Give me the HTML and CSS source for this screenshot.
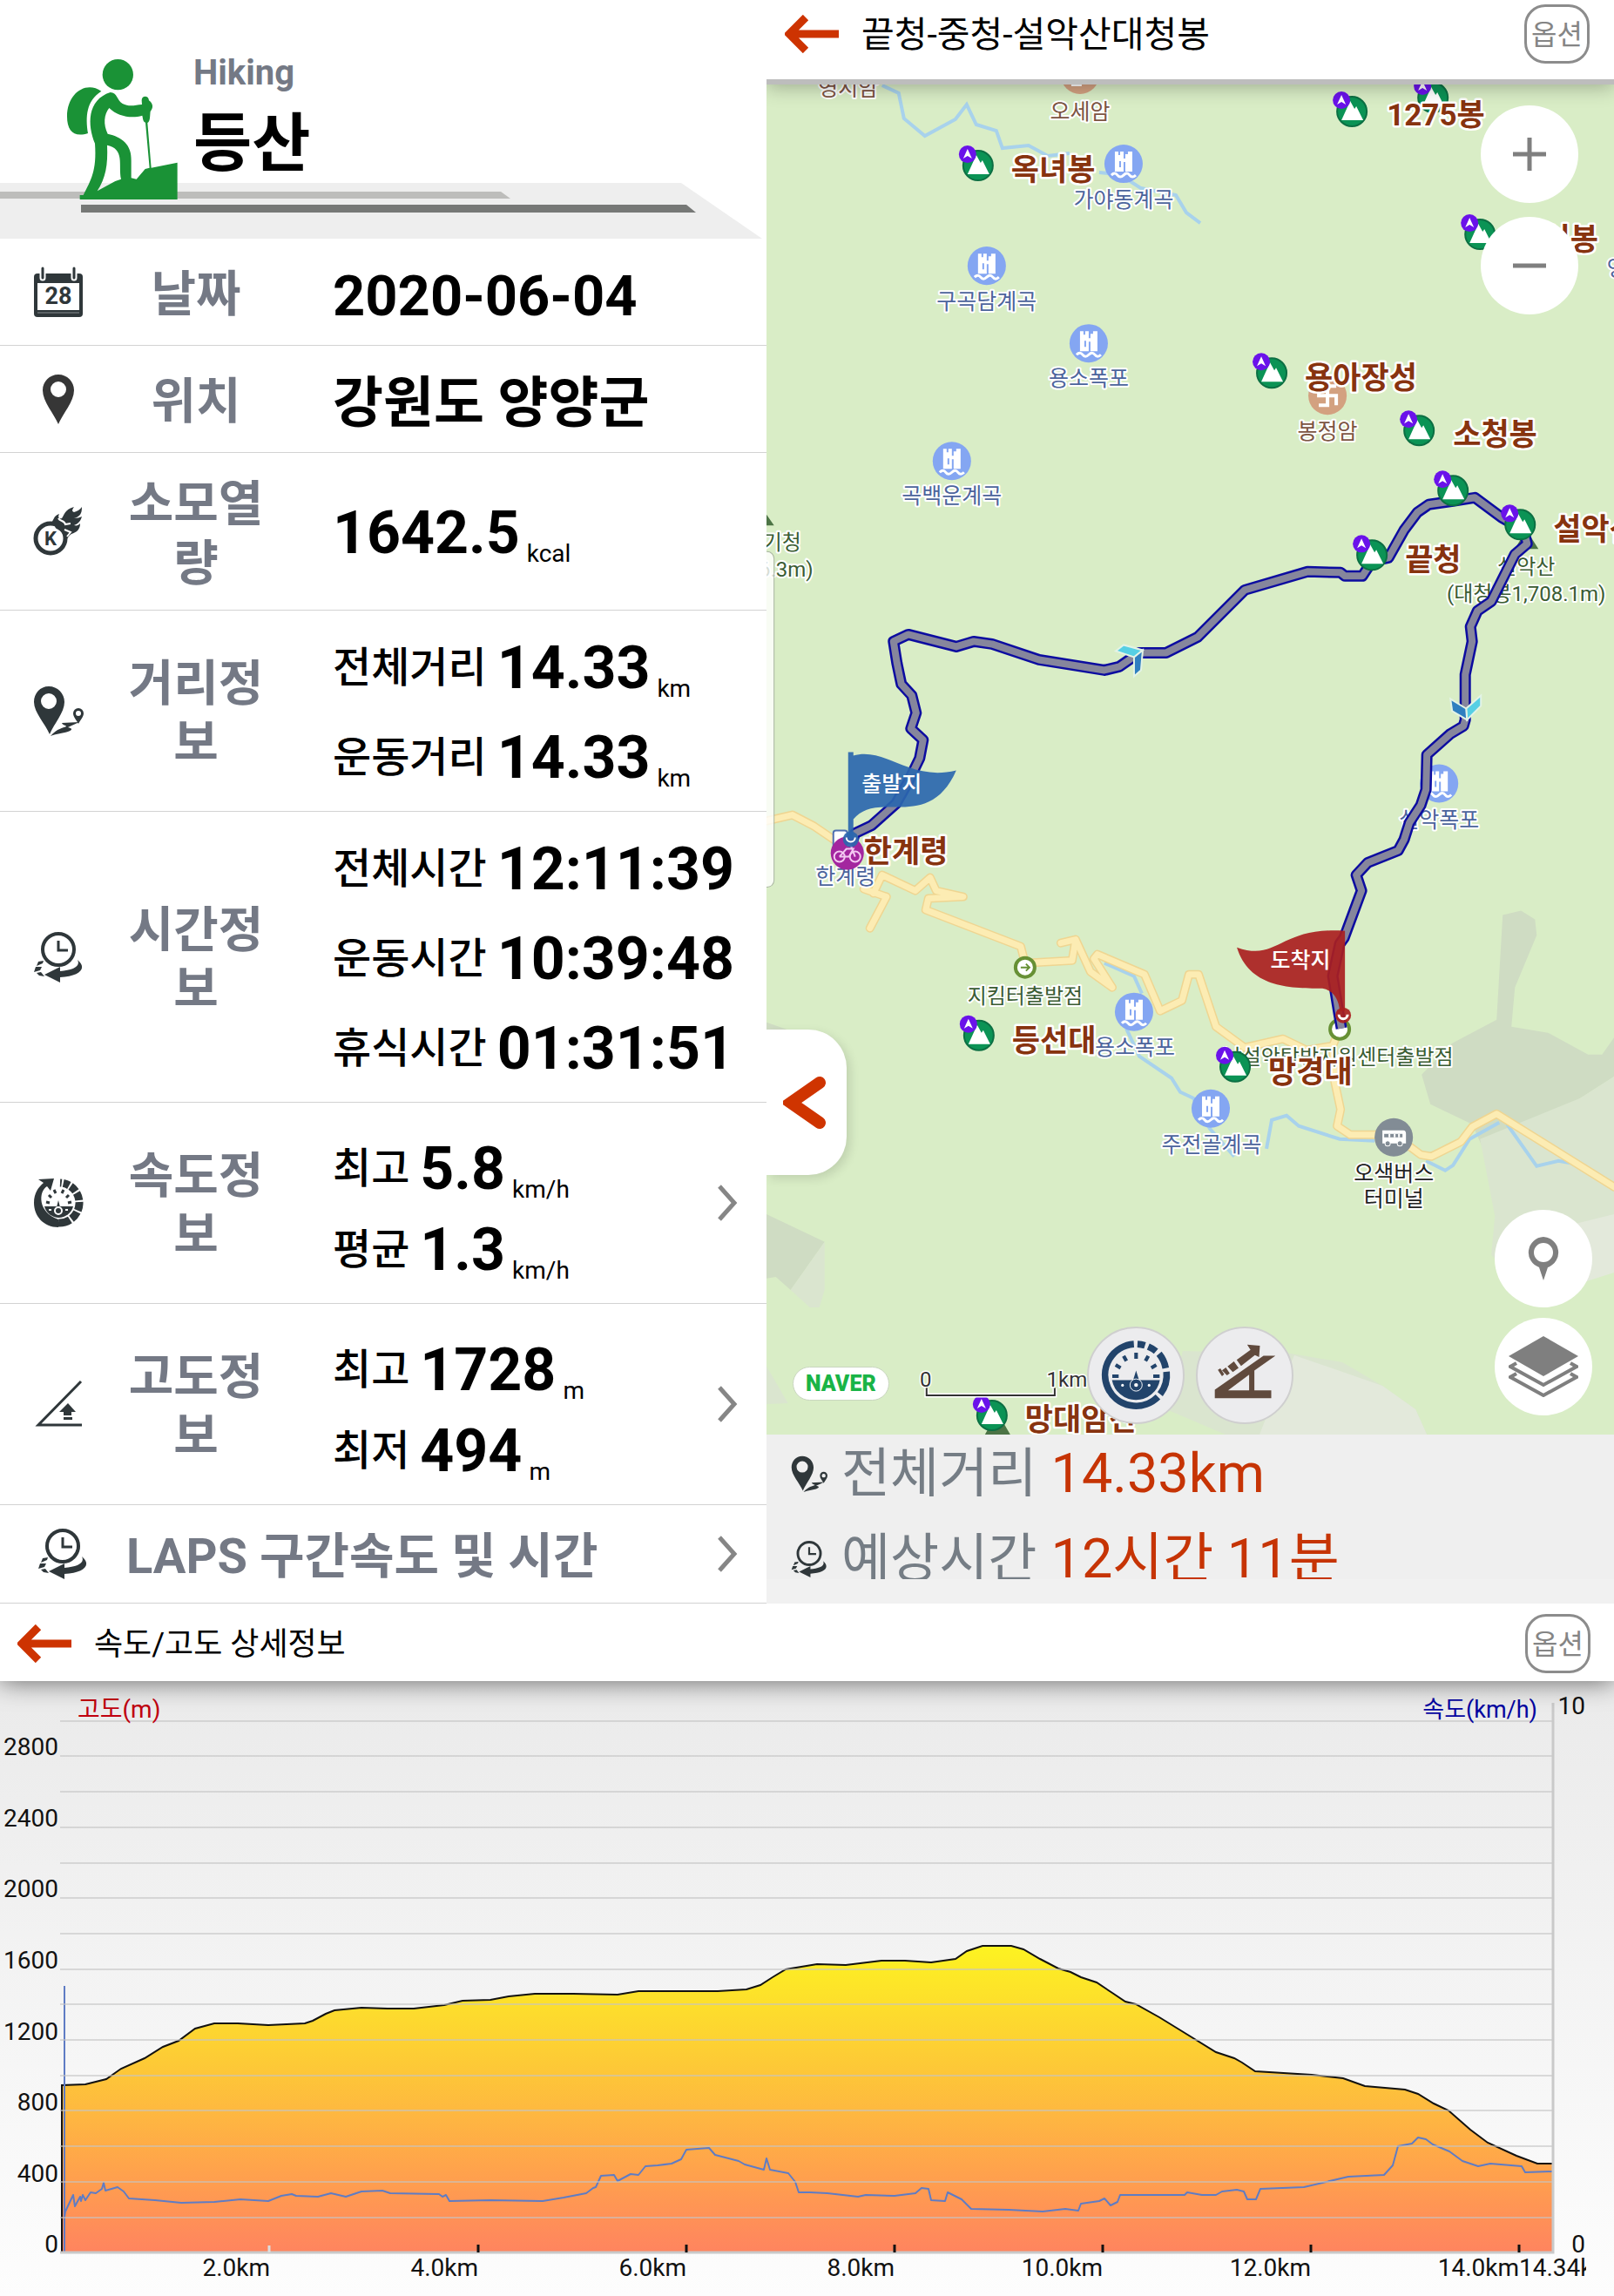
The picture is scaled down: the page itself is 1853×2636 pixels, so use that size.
FILE: index.html
```html
<!DOCTYPE html>
<html lang="ko">
<head>
<meta charset="utf-8">
<meta name="viewport" content="width=device-width, initial-scale=1">
<title>등산 기록</title>
<link rel="stylesheet" href="styles.css">
</head>
<body>
<svg class="defs" aria-hidden="true">
  <symbol id="i-chevron" viewBox="0 0 24 42"><path d="M2 2 19 21 2 40" fill="none" stroke="#868686" stroke-width="5"/></symbol>
  <symbol id="i-back" viewBox="0 0 64 44"><path d="M62 22H8M24 3 5 22l19 19" fill="none" stroke="#cd3301" stroke-width="9"/></symbol>
  <symbol id="i-pin" viewBox="0 0 58 58"><path fill-rule="evenodd" d="M29 1c10 0 18 8 18 18 0 13-13 27-18 39C24 46 11 32 11 19 11 9 19 1 29 1zm0 8a9 9 0 1 0 0 18 9 9 0 0 0 0-18z" fill="#363636"/></symbol>
  <symbol id="i-distance" viewBox="0 0 58 58">
    <path fill-rule="evenodd" d="M18 1c10 0 18 8 18 18 0 12-12 25-17 37C14 44 1 31 1 19 1 9 8 1 18 1zm0 8a9 9 0 1 0 0 18 9 9 0 0 0 0-18z" fill="#2f373a"/>
    <path d="M20 58c8-3 13-3 20-5 6-2 5-4 0-5 4-2 9-4 13-6l-20 1c1 3 6 3 5 4-4 2-10 2-18 11z" fill="#2f373a"/>
    <path fill-rule="evenodd" d="M52 26a6 6 0 0 1 6 6c0 4-4 8-6 12-2-4-6-8-6-12a6 6 0 0 1 6-6zm0 3a3 3 0 1 0 0 6 3 3 0 0 0 0-6z" fill="#2f373a"/>
  </symbol>
  <symbol id="i-time" viewBox="0 0 58 58">
    <circle cx="29" cy="20" r="18" fill="none" stroke="#2f373a" stroke-width="4"/>
    <path d="M29 10v11h11" fill="none" stroke="#2f373a" stroke-width="3"/>
    <path d="M51 32c12 10 2 19-20 20v6L13 49l18-9v5c14-1 24-5 20-13z" fill="#2f373a"/>
    <path d="M12 33l-6 1-2 5 7-3zM3 40l-2 6 7-2 2-4zM4 47l5-1 4 5-6-1z" fill="#2f373a"/>
  </symbol>
  <symbol id="i-speed" viewBox="0 0 58 58">
    <path d="M29 57C12 57 1 44 1 29 1 18 6 11 12 6L6 2l18-1-4 14-4-5C6 16 5 40 29 48z" fill="#2f373a"/>
    <path d="M29 52a23 23 0 1 0 2-46" fill="none" stroke="#2f373a" stroke-width="9" stroke-dasharray="14 2 10 2 10 2 9 2 8 2 7 2"/>
    <path d="M13 33h33a17 17 0 0 1-33 0z" fill="#2f373a"/>
    <path d="M15 28l4 1M18 20l3 3M24 14l2 4M35 14l-2 4M41 20l-3 3M44 28l-4 1" stroke="#2f373a" stroke-width="3"/>
    <path d="M29 26l3 12h-6z" fill="#2f373a"/><circle cx="29" cy="38" r="4" fill="#2f373a" stroke="#fff" stroke-width="2"/>
    <path d="M18 37h3M37 37h3" stroke="#fff" stroke-width="2"/>
  </symbol>
  <symbol id="i-altitude" viewBox="0 0 58 58">
    <path d="M55 3 6 53h50" fill="none" stroke="#2f373a" stroke-width="3"/>
    <path d="M40 28l9 10h-5v4h-9v-4h-5zM35 44h10v3H35z" fill="#2f373a"/>
  </symbol>
</svg>

<main class="page">
  <div class="overview">
    <section class="summary" aria-label="운동 요약">
      <header class="hero">
        <svg class="hero-art" viewBox="0 0 880 274" preserveAspectRatio="xMinYMax slice" aria-hidden="true">
          <path d="M0 210H782L875 274H0z" fill="#eee"/>
          <path d="M0 220H575L586 228H0z" fill="#bdbdbb"/>
          <path d="M93 235H788L799 244H93z" fill="#767876"/>
          <g transform="translate(65 60) scale(.3333)" fill="#1a9236">
            <circle cx="211" cy="77" r="53"/>
            <path d="M154 134c-52 33-55 88-46 145C60 294 36 271 36 221c0-80 65-124 118-87z"/>
            <path d="M185 138c24 1 22 26 42 39 23 12 43 5 67 3l-1-14c0-18 24-18 25 0 17 12 14 28 5 38-2 15 0 34-10 39l13 155 90-18v127H80v-15h12c25-51 47-82 40-178-26-62-28-150 53-176zM181 192c-18 23-21 56-5 89 49 11 83 37 81 92v60l18 4 30-35 15-4-14-156c-9-3-9-17-11-24-38 12-86 2-114-26zM174 320c3 69-5 112-34 158l62-34 20-7c-10-49 14-104-48-117z" fill-rule="evenodd"/>
          </g>
        </svg>
        <div class="hero-text">
          <p class="sport-en">Hiking</p>
          <h1 class="sport-ko">등산</h1>
        </div>
      </header>

      <ul class="stats">
        <li class="row">
          <svg class="icon" viewBox="0 0 58 58">
            <path d="M5 8h48a4 4 0 0 1 4 4v42a4 4 0 0 1-4 4H5a4 4 0 0 1-4-4V12a4 4 0 0 1 4-4z" fill="#2f373a"/>
            <path d="M5 19h48v31H5z" fill="#fff"/><path d="M5 53h48" stroke="#8b9092" stroke-width="1"/>
            <path d="M11 1v12M47 1v12" stroke="#fff" stroke-width="7" stroke-linecap="round"/>
            <path d="M11 2v11M47 2v11" stroke="#2f373a" stroke-width="3" stroke-linecap="round"/>
            <text x="29" y="43" text-anchor="middle" font-size="27" font-weight="700" fill="#2f373a">28</text>
          </svg>
          <span class="label">날짜</span>
          <div class="values values-single"><p class="line date"><strong>2020-06-04</strong></p></div>
        </li>
        <li class="row">
          <svg class="icon"><use href="#i-pin"/></svg>
          <span class="label">위치</span>
          <div class="values values-single"><p class="line place"><strong>강원도 양양군</strong></p></div>
        </li>
        <li class="row row-calories">
          <svg class="icon" viewBox="0 0 58 58">
            <circle cx="20" cy="37" r="17" fill="none" stroke="#2f373a" stroke-width="5"/>
            <path d="M20 20c4-3 3-9 10-11-2 4 0 6 3 5 3-4 3-10 14-13-2 3-3 5 0 6 4-1 7-3 9-6 0 8-2 11-9 13 3 0 7-1 9-2-2 7-6 9-9 10 3 1 5 0 7-2 0 7-4 10-10 12-3 2-5 6-7 8-1-6-4-11-10-14-3-1 0-5-7-6z" fill="#2f373a"/>
            <path d="M29 14c2 4 7 2 8 7l6-1M36 27l7 3-4 5" fill="none" stroke="#fff" stroke-width="2"/>
            <text x="20" y="45" text-anchor="middle" font-size="22" font-weight="700" fill="#2f373a">K</text>
          </svg>
          <span class="label">소모열량</span>
          <div class="values"><p class="line"><strong>1642.5</strong><span class="unit">kcal</span></p></div>
        </li>
        <li class="row">
          <svg class="icon"><use href="#i-distance"/></svg>
          <span class="label">거리정보</span>
          <div class="values">
            <p class="line"><span class="name">전체거리</span><strong>14.33</strong><span class="unit">km</span></p>
            <p class="line"><span class="name">운동거리</span><strong>14.33</strong><span class="unit">km</span></p>
          </div>
        </li>
        <li class="row">
          <svg class="icon"><use href="#i-time"/></svg>
          <span class="label">시간정보</span>
          <div class="values">
            <p class="line"><span class="name">전체시간</span><strong>12:11:39</strong></p>
            <p class="line"><span class="name">운동시간</span><strong>10:39:48</strong></p>
            <p class="line"><span class="name">휴식시간</span><strong>01:31:51</strong></p>
          </div>
        </li>
        <li class="row row-pair">
          <svg class="icon"><use href="#i-speed"/></svg>
          <span class="label">속도정보</span>
          <div class="values values-tight">
            <p class="line"><span class="name">최고</span><strong>5.8</strong><span class="unit">km/h</span></p>
            <p class="line"><span class="name">평균</span><strong>1.3</strong><span class="unit">km/h</span></p>
          </div>
          <button class="more" type="button" aria-label="속도 상세"><svg><use href="#i-chevron"/></svg></button>
        </li>
        <li class="row row-pair">
          <svg class="icon"><use href="#i-altitude"/></svg>
          <span class="label">고도정보</span>
          <div class="values values-tight">
            <p class="line"><span class="name">최고</span><strong>1728</strong><span class="unit">m</span></p>
            <p class="line"><span class="name">최저</span><strong>494</strong><span class="unit">m</span></p>
          </div>
          <button class="more" type="button" aria-label="고도 상세"><svg><use href="#i-chevron"/></svg></button>
        </li>
        <li class="row row-laps">
          <svg class="icon"><use href="#i-time"/></svg>
          <span class="laps">LAPS 구간속도 및 시간</span>
          <button class="more" type="button" aria-label="구간 상세"><svg><use href="#i-chevron"/></svg></button>
        </li>
      </ul>
    </section>

    <section class="course" aria-label="코스 지도">
      <header class="bar bar-map">
        <button class="back" type="button" aria-label="뒤로"><svg><use href="#i-back"/></svg></button>
        <h2 class="title title-map">끝청-중청-설악산대청봉</h2>
        <button class="option" type="button">옵션</button>
      </header>

      <div class="map">
        <svg class="map-canvas" viewBox="880 97 973 1549" preserveAspectRatio="xMidYMid slice" role="img" aria-label="설악산 등산 경로">
          <defs>
            <g id="fall"><circle r="22" fill="#84a6f2"/><path d="M-10-14h4v4h2v-4h4V9h-10zM2-11h3v-3h5V9H2zM-5-3v7h2v-7zM0-6h3v4H0z" fill="#fff"/><path d="M-14 13q4-4 7 0t7 0 7 0 7 0" fill="none" stroke="#fff" stroke-width="3"/></g>
            <g id="temple"><circle r="22" fill="#d3a180"/><path d="M-10-11V0H10V11M10-11H0V11H-10" fill="none" stroke="#fff" stroke-width="4"/></g>
            <g id="peak"><circle r="17" fill="#0b9355" stroke="#0c6f43" stroke-width="2"/><path d="M-12 10-2-12 3-3 5-6 13 10z" fill="#fff"/><circle cx="-12" cy="-13" r="10" fill="#6a12ea"/><path d="M-12-19l5 11-5-3-5 3z" fill="#fff"/></g>
          </defs>
          <rect x="880" y="97" width="973" height="1549" fill="#d9edc6"/>

          <g fill="#cfdcc3">
            <path d="M1725 1050 1746 1045 1762 1055 1764 1073 1739 1133 1735 1178 1777 1185 1823 1210 1839 1210 1853 1190V1235L1814 1260 1711 1337 1690 1290 1642 1267 1632 1233 1667 1197 1718 1170z"/>
            <path d="M880 1393 947 1425 908 1480 891 1465 880 1467zM880 1173 912 1184 880 1190z"/>
          </g>
          <g fill="#dae5cf">
            <path d="M1853 1235 1814 1260 1699 1307 1716 1395 1712 1440 1740 1470 1828 1465 1853 1450zM947 1425 908 1480 930 1500 941 1500 947 1480z"/>
            <path d="M880 1567 905 1610 880 1611zM1358 1550 1482 1553 1541 1563 1587 1590 1625 1617 1638 1646H1407L1339 1617z"/>
          </g>
          <path d="M1785 1410 1853 1393V1460L1790 1480zM1486 1555 1587 1590 1625 1617 1638 1646H1446L1460 1610z" fill="#e3e9db"/>

          <g class="river">
            <path d="M1013 98 1032 107 1038 136 1062 156 1097 137 1110 120 1121 143 1144 150 1151 170 1181 167 1203 179 1228 176M1262 198 1285 200 1310 216 1350 224 1362 244 1378 256"/>
            <path d="M1268 1105 1302 1120 1311 1140M1293 1180 1308 1212 1345 1237 1355 1253 1370 1260 1389 1295 1417 1327M1454 1318 1460 1285 1477 1280 1491 1292 1538 1307 1578 1309M1637 1332 1659 1343 1668 1337 1687 1307 1721 1288M1730 1290 1764 1338 1789 1332 1817 1337 1853 1365"/>
          </g>
          <path id="roads" class="road" d="M880 942 910 935 935 948 960 965M992 1020 1018 1029 999 1065M1003 1025 1013 1004 1051 1022 1068 1007 1075 1022 1106 1029 1066 1031 1063 1044 1172 1086 1177 1105 1231 1102 1235 1078 1218 1082M1235 1078 1252 1115 1277 1133 1256 1100 1260 1095 1314 1118 1332 1160 1357 1148 1365 1118 1376 1118 1396 1178 1429 1202 1473 1192 1500 1205 1530 1200 1538 1180M1530 1200 1532 1240 1539 1273 1535 1292 1550 1302 1600 1302 1631 1325 1643 1327 1677 1310 1690 1293 1718 1278 1853 1362"/>
          <use href="#roads" class="road-fill"/>

          <g fill="#4c7445"><path d="M869 603 880 590 889 603zM1739 630 1752 608 1766 630zM1131 1646 1145 1620 1160 1646z"/></g>

          <g>
            <use href="#temple" x="1240" y="86"/><use href="#temple" x="1524" y="454"/>
            <use href="#fall" x="1290" y="188"/><use href="#fall" x="1133" y="305"/><use href="#fall" x="1250" y="394"/>
            <use href="#fall" x="1093" y="529"/><use href="#fall" x="1652" y="899"/><use href="#fall" x="1302" y="1161"/><use href="#fall" x="1390" y="1272"/>
            <g transform="translate(1600 1305)"><circle r="22" fill="#828c95"/><path d="M-13-8h24q3 0 3 4V7h-27z" fill="#fff"/><path d="M-11-4h21v4h-21z" fill="#828c95"/><path d="M-5-4v4M1-4v4M6-4v4" stroke="#fff" stroke-width="2"/><circle cx="-7" cy="7" r="3" fill="#828c95" stroke="#fff"/><circle cx="7" cy="7" r="3" fill="#828c95" stroke="#fff"/></g>
            <g fill="#fff" stroke="#679035" stroke-width="4"><circle cx="1177" cy="1110" r="11"/><circle cx="1538" cy="1181" r="11"/></g>
            <path d="M1172 1110h9M1178 1106l4 4-4 4" fill="none" stroke="#679035" stroke-width="2"/>
          </g>

          <g class="poi poi-temple"><text x="974" y="110">영시암</text><text x="1240" y="137">오세암</text><text x="1524" y="504">봉정암</text></g>
          <g class="poi poi-water">
            <text x="1290" y="238">가야동계곡</text><text x="1133" y="355">구곡담계곡</text><text x="1250" y="443">용소폭포</text><text x="1093" y="578">곡백운계곡</text>
            <text x="1652" y="949">설악폭포</text><text x="1303" y="1210">용소폭포</text><text x="1391" y="1322">주전골계곡</text><text x="971" y="1014">한계령</text><text x="1856" y="317">영</text>
          </g>
          <g class="poi poi-hill">
            <text x="876" y="631">귀때기청</text><text x="876" y="662">(1,576.3m)</text><text x="1752" y="659">설악산</text><text x="1752" y="690">(대청봉1,708.1m)</text>
            <text x="1177" y="1151">지킴터출발점</text><text x="1536" y="1221">남설악탐방지원센터출발점</text>
          </g>
          <g class="poi poi-stop"><text x="1600" y="1355">오색버스</text><text x="1600" y="1384">터미널</text></g>

          <path id="track" class="track" d="M978 968 982 956 1001 947 1029 922 1043 897 1056 870 1060 849 1046 836 1052 818 1047 798 1035 785 1030 761 1026 736 1043 728 1098 742 1118 736 1139 739 1193 757 1268 769 1285 765 1308 749 1339 749 1375 731 1429 677 1501 656 1539 657 1544 661 1564 661 1575 644 1594 640 1612 608 1627 588 1640 579 1668 575 1693 571 1724 594 1749 608 1753 624 1739 636 1712 690 1696 701 1688 719 1690 736 1682 774 1682 826 1680 833 1665 842 1638 866 1637 906 1631 924 1618 944 1612 963 1605 976 1570 990 1557 1004 1563 1022 1543 1076 1538 1083 1530 1120 1537 1163 1540 1180"/>
          <use href="#track" class="track-fill"/>
          <g stroke="#e3f3e6" stroke-width="2">
            <path d="M1281 747 1290 740 1312 746 1302 754zM1700 798 1700 810 1684 826 1683 813z" fill="#56cfe4"/>
            <path d="M1312 746 1310 769 1302 776 1302 754zM1665 802 1683 813 1684 826 1667 816z" fill="#2f7fc0"/>
          </g>

          <g>
            <use href="#peak" x="1645" y="112"/><use href="#peak" x="1552" y="128"/><use href="#peak" x="1123" y="190"/><use href="#peak" x="1699" y="269"/>
            <use href="#peak" x="1460" y="428"/><use href="#peak" x="1629" y="494"/><use href="#peak" x="1668" y="563"/><use href="#peak" x="1745" y="602"/>
            <use href="#peak" x="1575" y="637"/><use href="#peak" x="1124" y="1188"/><use href="#peak" x="1418" y="1224"/><use href="#peak" x="1139" y="1624"/>
          </g>

          <g><rect x="957" y="953" width="16" height="20" rx="3" fill="#fff" stroke="#4f6fb0" stroke-width="2"/><circle cx="973" cy="979" r="19" fill="#a3269f"/>
            <g fill="none" stroke="#f3c8f2" stroke-width="2"><circle cx="964" cy="983" r="6"/><circle cx="982" cy="983" r="6"/><path d="M964 983l8-9h8l-5 9h-11M982 983l-5-13h-4"/></g></g>
          <g class="flag-start"><path d="M974 863h6v4c38-10 64 30 118 17-20 46-53 42-80 42-19 0-29 4-38 14v22h-6z"/><circle cx="977" cy="963" r="9"/><path d="M972 961a5 5 0 0 0 10 0" fill="none" stroke="#fff" stroke-width="2"/></g>
          <g class="flag-end"><path d="M1420 1087c48 17 48-24 124-19v92h-6c-1-14-8-24-20-26-40 0-84-2-98-47z"/><circle cx="1542" cy="1165" r="9"/><path d="M1537 1164a5 5 0 0 0 10 0" fill="none" stroke="#fff" stroke-width="3"/></g>
          <g class="flag-text"><text x="1024" y="908">출발지</text><text x="1493" y="1110">도착지</text></g>

          <g class="summit">
            <text x="1592" y="144">1275봉</text><text x="1161" y="207">옥녀봉</text><text x="1738" y="287">신선봉</text><text x="1498" y="446">용아장성</text>
            <text x="1668" y="511">소청봉</text><text x="1783" y="620">설악산</text><text x="1613" y="655">끝청</text><text x="992" y="989">한계령</text>
            <text x="1162" y="1206">등선대</text><text x="1456" y="1242">망경대</text><text x="1177" y="1641">망대암산</text>
          </g>
          <path d="M1064 1593v8h147v-8" fill="none" stroke="#fff" stroke-width="5"/>
          <path d="M1064 1592v9h147v-9" fill="none" stroke="#333" stroke-width="2"/>
          <g class="scale"><text x="1063" y="1591">0</text><text x="1225" y="1591">1km</text></g>
          <path d="M878 633h3a8 8 0 0 1 8 8v369a8 8 0 0 1-8 8h-3z" fill="#fff" fill-opacity=".8" stroke="#a9b5a0"/>
        </svg>

        <span class="naver">NAVER</span>
        <button class="round zoom-in" type="button" aria-label="확대"><svg viewBox="0 0 40 40"><path d="M20 1v38M1 20h38" stroke="#7f7f7f" stroke-width="5"/></svg></button>
        <button class="round zoom-out" type="button" aria-label="축소"><svg viewBox="0 0 40 40"><path d="M1 20h38" stroke="#7f7f7f" stroke-width="5"/></svg></button>
        <button class="round locate" type="button" aria-label="내 위치"><svg viewBox="0 0 40 50"><path fill-rule="evenodd" d="M20 0a18 18 0 0 1 5 35l-5 15-5-15A18 18 0 0 1 20 0zm0 7a11 11 0 1 0 0 22 11 11 0 0 0 0-22z" fill="#7f7f7f"/></svg></button>
        <button class="round layers" type="button" aria-label="지도 종류"><svg class="big" viewBox="0 0 80 70"><path d="M40 0 80 23 40 46 0 23z" fill="#7f7f7f"/><path d="M9 31 2 35 40 56 78 35 71 31M9 43 2 47 40 68 78 47 71 43" fill="none" stroke="#7f7f7f" stroke-width="4"/></svg></button>
        <button class="round tinted gauge" type="button" aria-label="속도 그래프">
          <svg class="full" viewBox="0 0 340 340"><g fill="none" stroke="#22446b" stroke-width="24"><path d="M250 248A112 112 0 1 1 163 57"/><path d="M176 57A112 112 0 0 1 203 62M215 66A112 112 0 0 1 243 83M254 92A112 112 0 0 1 278 144M281 157A112 112 0 0 1 258 238"/><path d="M171 110V88M136 118 126 100M205 118 215 100M115 143 97 132M226 143 244 132M108 173H85M233 173H256" stroke-width="13"/></g><path d="M84 187H257A88 88 0 0 1 84 187z" fill="#22446b"/><path d="M171 153 184 195H158z" fill="#22446b"/><circle cx="171" cy="205" r="22" fill="#22446b" stroke="#fff" stroke-width="3"/><circle cx="171" cy="205" r="7" fill="#fff"/><circle cx="122" cy="206" r="5" fill="#fff"/><circle cx="218" cy="206" r="5" fill="#fff"/></svg></button>
        <button class="round tinted slope" type="button" aria-label="고도 그래프">
          <svg class="full" viewBox="0 0 340 340" fill="#604a3d"><path fill-rule="evenodd" d="M62 222 238 99H281L205 153V224H266V253H62zM110 224H186V168z"/><path d="M141 114 191 78 179 59 225 63 222 104 207 97 157 136zM108 138 131 120 148 143 127 158zM88 152 102 142 116 163 106 170zM73 150 82 145 96 166 88 173z"/></svg></button>
        <button class="drawer" type="button" aria-label="목록 열기"><svg viewBox="0 0 50 62"><path d="M42 8 9 31 42 54" fill="none" stroke="#cf3400" stroke-width="14" stroke-linecap="round" stroke-linejoin="miter"/></svg></button>
      </div>

      <dl class="totals">
        <div class="total"><dt><svg><use href="#i-distance"/></svg>전체거리</dt><dd>14.33km</dd></div>
        <div class="total"><dt><svg><use href="#i-time"/></svg>예상시간</dt><dd>12시간 11분</dd></div>
      </dl>
    </section>
  </div>

  <section class="detail" aria-label="속도와 고도 그래프">
    <header class="bar bar-chart">
      <button class="back" type="button" aria-label="뒤로"><svg><use href="#i-back"/></svg></button>
      <h2 class="title">속도/고도 상세정보</h2>
      <button class="option" type="button">옵션</button>
    </header>
    <svg class="chart" viewBox="0 1929 1853 707" role="img" aria-label="거리별 고도와 속도">
      <defs><linearGradient id="terrain" gradientUnits="userSpaceOnUse" x1="0" y1="2233" x2="0" y2="2585"><stop offset="0" stop-color="#fdf321"/><stop offset=".4" stop-color="#fdc837"/><stop offset=".72" stop-color="#ffa44b"/><stop offset="1" stop-color="#ff845f"/></linearGradient></defs>
      <path d="M71 2585V2393L98 2392 122 2386 139 2374 166 2362 187 2349 205 2342 224 2328 246 2322H273L308 2324 350 2322 359 2319 374 2311 384 2307 415 2304 445 2305H475L510 2301 531 2296 563 2295 584 2291 614 2288H658L709 2289 733 2285H824L857 2283 873 2278 887 2269 902 2260 938 2254 971 2255 1012 2250H1039L1069 2252 1097 2248 1110 2239 1128 2233H1161L1175 2237 1194 2248 1215 2259 1229 2263 1241 2269 1259 2275 1277 2287 1292 2297 1304 2300 1331 2315 1357 2331 1396 2355 1417 2362 1426 2367 1441 2377 1506 2381 1542 2385 1567 2394 1613 2398 1628 2403 1646 2414 1663 2422 1688 2444 1708 2459 1741 2474 1765 2483H1782V2585z" fill="url(#terrain)"/>
      <path d="M71 2585V2393L98 2392 122 2386 139 2374 166 2362 187 2349 205 2342 224 2328 246 2322H273L308 2324 350 2322 359 2319 374 2311 384 2307 415 2304 445 2305H475L510 2301 531 2296 563 2295 584 2291 614 2288H658L709 2289 733 2285H824L857 2283 873 2278 887 2269 902 2260 938 2254 971 2255 1012 2250H1039L1069 2252 1097 2248 1110 2239 1128 2233H1161L1175 2237 1194 2248 1215 2259 1229 2263 1241 2269 1259 2275 1277 2287 1292 2297 1304 2300 1331 2315 1357 2331 1396 2355 1417 2362 1426 2367 1441 2377 1506 2381 1542 2385 1567 2394 1613 2398 1628 2403 1646 2414 1663 2422 1688 2444 1708 2459 1741 2474 1765 2483H1782" fill="none" stroke="#111" stroke-width="2"/>
      <path d="M74 2585V2279M74 2545 75 2538 84 2519 86 2532 92 2521 93 2526 95 2519 98 2525 104 2516 110 2517 117 2512 119 2505 121 2514 135 2510 142 2515 148 2523 178 2525 208 2528 246 2527 276 2524 308 2526 323 2520 335 2518 340 2520 365 2521 380 2517 397 2521 415 2515 439 2514 448 2517 504 2518 508 2521 512 2519 516 2526 563 2525 623 2526 647 2522 673 2517 681 2511 684 2510 690 2497 705 2496 709 2503 724 2495 733 2496 741 2486 755 2485 771 2483 782 2478 788 2467 814 2465 821 2473 848 2480 855 2484 877 2490 880 2477 884 2490 905 2494 913 2504 917 2516 930 2516 950 2517 985 2521 994 2519 1027 2520 1051 2517 1058 2511 1066 2512 1069 2525 1085 2526 1088 2516 1104 2524 1115 2535 1158 2536 1197 2538 1223 2535 1238 2537 1241 2529 1262 2526 1268 2523 1275 2531 1283 2527 1286 2519 1360 2519 1363 2516 1380 2519 1396 2519 1403 2515 1420 2513 1428 2515 1432 2524 1442 2524 1447 2512 1497 2510 1548 2498 1589 2496 1599 2485 1605 2463 1621 2460 1628 2453 1637 2455 1645 2461 1664 2469 1679 2480 1697 2486 1711 2483 1747 2486 1751 2493 1782 2492" fill="none" stroke="#5f7cc4" stroke-width="2" stroke-linejoin="round"/>
      <path d="M69 1975H1783M69 2015H1783M69 2056H1783M69 2097H1783M69 2138H1783M69 2178H1783M69 2219H1783M69 2260H1783M69 2300H1783M69 2341H1783M69 2382H1783M69 2422H1783M69 2463H1783M69 2504H1783M69 2545H1783" stroke="#c4c4c4" stroke-opacity=".6" stroke-width="2"/>
      <path d="M69 2585H1783V1954" fill="none" stroke="#c9c9c9" stroke-width="3"/>
      <path d="M309 2577v8" stroke="#ddd" stroke-width="3"/>
      <path d="M549 2576v9M788 2576v9M1027 2576v9M1266 2576v9M1505 2576v9M1744 2576v9" stroke="#111" stroke-width="3"/>
      <g class="tick"><text x="67" y="2014">2800</text><text x="67" y="2096">2400</text><text x="67" y="2177">2000</text><text x="67" y="2259">1600</text><text x="67" y="2341">1200</text><text x="67" y="2422">800</text><text x="67" y="2504">400</text><text x="67" y="2585">0</text>
        <text x="1820" y="1967">10</text><text x="1820" y="2585">0</text>
        <text x="310" y="2612">2.0km</text><text x="549" y="2612">4.0km</text><text x="788" y="2612">6.0km</text><text x="1027" y="2612">8.0km</text><text x="1266" y="2612">10.0km</text><text x="1505" y="2612">12.0km</text><text x="1744" y="2612">14.0km</text></g>
      <svg x="1744" y="2588" width="77" height="40"><text class="tick-last" x="0" y="24">14.34km</text></svg>
      <text class="axis-alt" x="89" y="1971">고도(m)</text><text class="axis-speed" x="1765" y="1971">속도(km/h)</text>
    </svg>
  </section>
</main>
</body>
</html>
```
FILE: styles.css
```css
* { box-sizing: border-box; }

body {
  margin: 0;
  background: #fff;
  color: #000;
  font-family: Roboto, "Noto Sans CJK KR", sans-serif;
}

h1, h2, p, ul, dl, dd { margin: 0; padding: 0; }
button { padding: 0; border: 0; background: none; font: inherit; cursor: pointer; }
svg { display: block; }
.defs { position: absolute; width: 0; height: 0; }

.overview {
  display: grid;
  grid-template-columns: 880fr 973fr;
}

/* Summary column */
.hero { display: grid; }
.hero-art, .hero-text { grid-area: 1 / 1; }
.hero-art { width: 100%; height: 100%; }
.hero-text { padding: 60px 0 52px 222px; }
.sport-en { color: #747985; font-size: 40px; line-height: 48px; font-weight: 700; }
.sport-ko { font-size: 73px; line-height: 114px; font-weight: 700; }

.stats { list-style: none; }
.row {
  display: grid;
  grid-template-columns: 58px 258px 1fr auto;
  align-items: center;
  padding: 10px 32px 10px 38px;
  border-bottom: 1px solid #d2d2d2;
}
.row-calories { padding-block: 19px; }
.row-pair { padding-block: 15px; }
.icon { width: 58px; height: 58px; }
.label {
  padding: 6px 49px 0;
  color: #747985;
  font-size: 56px;
  line-height: 68px;
  font-weight: 700;
  text-align: center;
}
.values { padding: 4px 0 0 28px; white-space: nowrap; }
.line { display: flex; align-items: center; height: 103px; }
.values-single { padding-top: 10px; }
.values-single .line { height: 92px; }
.values-tight { padding-top: 14px; }
.values-tight .line { height: 93px; }
.line strong { font-size: 68px; line-height: 78px; font-weight: 700; }
.date strong { font-size: 65px; }
.place strong { font-size: 63px; }
.name { margin-right: 12px; font-size: 48px; line-height: 60px; font-weight: 500; }
.unit { padding: 48px 0 0 8px; font-size: 28px; line-height: 32px; }
.more svg { width: 24px; height: 42px; }
.row-laps { padding-left: 43px; }
.laps {
  grid-column: 2 / 4;
  padding: 6px 0 0 44px;
  color: #747985;
  font-size: 56px;
  line-height: 86px;
  font-weight: 700;
  white-space: nowrap;
}

/* Title bars */
.bar {
  position: relative;
  z-index: 1;
  display: flex;
  align-items: center;
  gap: 24px;
  background: #fff;
  clip-path: inset(0 0 -60px 0);
}
.bar-map { padding: 5px 28px 18px 21px; border-bottom: 6px solid #bdbdbd; box-shadow: 0 2px 22px rgba(0, 0, 0, .3); }
.bar-chart { padding: 12px 27px 9px 20px; box-shadow: 0 0 30px rgba(0, 0, 0, .6); }
.back svg { width: 64px; height: 44px; }
.title { padding-top: 2px; font-size: 36px; line-height: 52px; font-weight: 400; }
.title-map { font-size: 41px; }
.option {
  width: 75px;
  height: 68px;
  margin-left: auto;
  padding-bottom: 4px;
  border: 3px solid #8c8c8c;
  border-radius: 24px;
  color: #858585;
  font-size: 32px;
}

/* Map column */
.course { display: flex; flex-direction: column; overflow: hidden; background: #f1f1f1; }
.map { position: relative; flex: 1; overflow: hidden; }
.map-canvas { position: absolute; inset: 0; width: 100%; height: 100%; }

.river { fill: none; stroke: #a8d2ec; stroke-width: 4; }
.road, .track { fill: none; stroke-linejoin: round; }
.road { stroke: var(--line, #efd591); stroke-width: var(--size, 10); stroke-linecap: round; }
.road-fill { --line: #fcecb3; --size: 7; }
.track { stroke: var(--line, #0c0ca0); stroke-width: var(--size, 13); }
.track-fill { --line: #86869c; --size: 8; }
.poi { font-size: 25px; text-anchor: middle; stroke: #fff; stroke-width: 4px; stroke-linejoin: round; paint-order: stroke; }
.poi-temple { fill: #7c5442; }
.poi-water { fill: #4c649c; }
.poi-hill { fill: #3a5c33; font-size: 24px; }
.poi-stop { fill: #222; }
.summit { font-size: 35px; font-weight: 700; fill: #87330f; stroke: #fff; stroke-width: 5px; stroke-linejoin: round; paint-order: stroke; }
.flag-start { fill: #2b67ae; fill-opacity: .92; }
.flag-end { fill: #aa2020; fill-opacity: .92; }
.flag-text { font-size: 25px; fill: #fff; text-anchor: middle; font-weight: 500; }
.scale { font-size: 24px; fill: #333; text-anchor: middle; stroke: #fff; stroke-width: 3px; paint-order: stroke; }

.naver {
  position: absolute;
  left: 30px;
  bottom: 39px;
  padding: 0 14px;
  border: 1px solid #c9d6bf;
  border-radius: 20px;
  background: #fff;
  color: #19b446;
  font-size: 25px;
  line-height: 37px;
  font-weight: 900;
}
.round {
  position: absolute;
  display: grid;
  place-items: center;
  width: 112px;
  height: 112px;
  border-radius: 50%;
  background: #fff;
}
.round svg { width: 40px; height: 50px; }
.round .big { width: 80px; height: 70px; }
.round .full { width: 108px; height: 108px; }
.tinted { border: 2px solid #cfcfcf; background: #ececee; }
.zoom-in { top: 24px; right: 41px; }
.zoom-out { top: 152px; right: 41px; }
.locate { right: 25px; bottom: 146px; }
.layers { right: 25px; bottom: 22px; }
.gauge { left: 368px; bottom: 12px; }
.slope { left: 493px; bottom: 12px; }
.drawer {
  position: absolute;
  left: 0;
  top: 1085px;
  display: grid;
  align-items: center;
  width: 92px;
  height: 167px;
  padding-left: 19px;
  border-radius: 0 44px 44px 0;
  background: #fff;
  box-shadow: 4px 4px 12px rgba(0, 0, 0, .12);
}
.drawer svg { width: 50px; height: 62px; }

.totals {
  display: grid;
  gap: 8px;
  height: 166px;
  margin-bottom: 28px;
  overflow: hidden;
  background: #efefef;
}
.total { display: flex; gap: 16px; font-size: 61px; line-height: 90px; white-space: nowrap; }
.total dt { display: flex; align-items: center; gap: 16px; padding-left: 28px; color: #757d85; }
.total dt svg { width: 42px; height: 42px; }
.total dd { color: #c63405; font-size: 63px; }

/* Elevation chart */
.detail { background: linear-gradient(#e8e8e8, #fdfdfd); }
.chart { width: 100%; height: auto; }
.tick, .tick-last { font-size: 28px; fill: #111; }
.tick { text-anchor: end; }
.axis-alt { font-size: 28px; fill: #c0000e; }
.axis-speed { font-size: 27px; fill: #0404a0; text-anchor: end; }
```
